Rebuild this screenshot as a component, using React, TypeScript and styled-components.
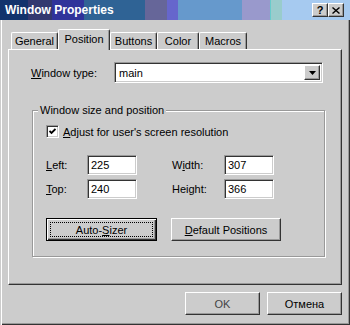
import React from "react";
import styled, { createGlobalStyle, css } from "styled-components";

const GlobalStyle = createGlobalStyle`
  html, body {
    margin: 0;
    padding: 0;
    background: #cccccc;
  }
  body {
    font-family: "Liberation Sans", Arial, sans-serif;
    font-size: 11px;
    color: #000000;
  }
`;

const raised = css`
  box-sizing: border-box;
  border: 1px solid;
  border-color: #ffffff #333333 #333333 #ffffff;
  box-shadow: inset -1px -1px #999999;
  background: #cccccc;
`;

const sunken = css`
  box-sizing: border-box;
  border: 1px solid;
  border-color: #999999 #ffffff #ffffff #999999;
  box-shadow: inset 1px 1px #333333, inset -1px -1px #cccccc;
  background: #ffffff;
`;

const Window = styled.div`
  width: 350px;
  height: 325px;
  box-sizing: border-box;
  display: flex;
  flex-direction: column;
  background: #cccccc;
  box-shadow: inset 1px 0 #cccccc, inset 2px 0 #ffffff, inset -1px -1px #333333,
    inset -2px -2px #999999;
`;

const TitleBar = styled.div`
  height: 20px;
  flex: none;
  display: flex;
  align-items: center;
  padding: 0 6px 0 5px;
  color: #ffffff;
  font-weight: bold;
  font-size: 12px;
  background: linear-gradient(
    to right,
    #12336c 0 28px,
    #33386f 28px 52px,
    #30339a 52px 84px,
    #2f6395 84px 145px,
    #666699 145px 167px,
    #6666cc 167px 178px,
    #6699cc 178px 242px,
    #9999cc 242px 270px,
    #66cccc 270px 271px,
    #99cccc 271px 282px,
    #a6caf0 282px
  );
`;

const Title = styled.span`
  flex: 1;
`;

const CaptionButton = styled.div`
  ${raised};
  width: 16px;
  height: 14px;
  display: flex;
  align-items: center;
  justify-content: center;
  color: #000000;
  font-size: 11px;
  font-weight: bold;
  line-height: 1;
`;

const Content = styled.div`
  flex: 1;
  display: flex;
  flex-direction: column;
  padding: 9px 8px 0 8px;
`;

const TabStrip = styled.div`
  display: flex;
  align-items: flex-end;
  height: 20px;
  padding-left: 3px;
`;

const Tab = styled.div<{ $active?: boolean; $w: number }>`
  position: relative;
  box-sizing: border-box;
  width: ${(p) => p.$w}px;
  height: ${(p) => (p.$active ? 21 : 17)}px;
  margin-bottom: ${(p) => (p.$active ? -1 : 0)}px;
  z-index: ${(p) => (p.$active ? 1 : 0)};
  display: flex;
  align-items: center;
  justify-content: center;
  padding-bottom: ${(p) => (p.$active ? 3 : 0)}px;
  border-top: 1px solid #ffffff;
  border-left: 1px solid #ffffff;
  border-right: 1px solid #333333;
  border-radius: 2px 2px 0 0;
  box-shadow: inset -1px 0 #999999;
  background: #cccccc;
`;

const Panel = styled.div`
  box-sizing: border-box;
  height: 236px;
  border: 1px solid;
  border-color: #ffffff #333333 #333333 #ffffff;
  box-shadow: inset -1px -1px #999999;
  padding: 12px 0 0 22px;
`;

const Row = styled.div`
  display: flex;
  align-items: center;
`;

const Label = styled.span<{ $w?: number }>`
  width: ${(p) => (p.$w ? `${p.$w}px` : "auto")};
  flex: none;
`;

const U = styled.span`
  text-decoration: underline;
  text-underline-offset: 1px;
`;

const Combo = styled.div`
  ${sunken};
  width: 209px;
  height: 21px;
  display: flex;
  align-items: stretch;
  padding: 2px;
`;

const ComboValue = styled.span`
  flex: 1;
  display: flex;
  align-items: center;
  padding-left: 2px;
`;

const DropButton = styled.div`
  ${raised};
  width: 16px;
  display: flex;
  align-items: center;
  justify-content: center;
`;

const GroupBox = styled.fieldset`
  box-sizing: border-box;
  width: 293px;
  margin: 21px 0 0 1px;
  padding: 8px 0 15px 13px;
  border: 1px solid #999999;
  box-shadow: 1px 1px #ffffff, inset 1px 1px #ffffff;
`;

const Legend = styled.legend`
  margin-left: -8px;
  padding: 0 2px;
  line-height: 13px;
  background: #cccccc;
`;

const CheckRow = styled.label`
  display: flex;
  align-items: center;
  gap: 4px;
`;

const CheckBox = styled.span`
  ${sunken};
  width: 13px;
  height: 13px;
  display: flex;
  align-items: center;
  justify-content: center;
`;

const FieldGrid = styled.div`
  display: grid;
  grid-template-columns: 41px 85px 52px 50px;
  row-gap: 4px;
  align-items: center;
  margin-top: 17px;
`;

const Field = styled.div`
  ${sunken};
  width: 50px;
  height: 20px;
  display: flex;
  align-items: center;
  padding-left: 3px;
`;

const ButtonRow = styled.div`
  display: flex;
  gap: 14px;
  margin-top: 19px;
`;

const Button = styled.div<{ $w: number; $focused?: boolean; $dim?: boolean }>`
  ${raised};
  width: ${(p) => p.$w}px;
  height: 23px;
  display: flex;
  align-items: center;
  justify-content: center;
  color: ${(p) => (p.$dim ? "#444444" : "#000000")};
  ${(p) =>
    p.$focused &&
    css`
      border-color: #000000;
      box-shadow: inset 1px 1px #ffffff, inset -1px -1px #333333,
        inset -2px -2px #999999;
    `}
`;

const FocusRect = styled.span`
  box-sizing: border-box;
  width: calc(100% - 6px);
  height: calc(100% - 6px);
  border: 1px dotted #000000;
  display: flex;
  align-items: center;
  justify-content: center;
`;

const Footer = styled.div`
  display: flex;
  justify-content: flex-end;
  gap: 7px;
  margin-top: 7px;
`;

export default function App() {
  return (
    <>
      <GlobalStyle />
      <Window>
        <TitleBar>
          <Title>Window Properties</Title>
          <CaptionButton>?</CaptionButton>
          <CaptionButton>
            <svg width="8" height="7" viewBox="0 0 8 7">
              <path d="M0.5 0.5 L7.5 6.5 M7.5 0.5 L0.5 6.5" stroke="#000" strokeWidth="1.4" />
            </svg>
          </CaptionButton>
        </TitleBar>
        <Content>
          <TabStrip>
            <Tab $w={47}>General</Tab>
            <Tab $w={52} $active>
              Position
            </Tab>
            <Tab $w={47}>Buttons</Tab>
            <Tab $w={42}>Color</Tab>
            <Tab $w={48}>Macros</Tab>
          </TabStrip>
          <Panel>
            <Row>
              <Label $w={83}>
                <U>W</U>indow type:
              </Label>
              <Combo>
                <ComboValue>main</ComboValue>
                <DropButton>
                  <svg width="7" height="4" viewBox="0 0 7 4">
                    <polygon points="0,0 7,0 3.5,4" fill="#000" />
                  </svg>
                </DropButton>
              </Combo>
            </Row>
            <GroupBox>
              <Legend>Window size and position</Legend>
              <CheckRow>
                <CheckBox>
                  <svg width="7" height="7" viewBox="0 0 7 7">
                    <polyline points="0.5,3 2.5,5 6.5,1" fill="none" stroke="#000" strokeWidth="1.8" />
                  </svg>
                </CheckBox>
                <span>
                  <U>A</U>djust for user's screen resolution
                </span>
              </CheckRow>
              <FieldGrid>
                <Label>
                  <U>L</U>eft:
                </Label>
                <Field>225</Field>
                <Label>
                  W<U>i</U>dth:
                </Label>
                <Field>307</Field>
                <Label>
                  <U>T</U>op:
                </Label>
                <Field>240</Field>
                <Label>Height:</Label>
                <Field>366</Field>
              </FieldGrid>
              <ButtonRow>
                <Button $w={111} $focused>
                  <FocusRect>
                    <span>
                      Auto-<U>S</U>izer
                    </span>
                  </FocusRect>
                </Button>
                <Button $w={110}>
                  <span>
                    <U>D</U>efault Positions
                  </span>
                </Button>
              </ButtonRow>
            </GroupBox>
          </Panel>
          <Footer>
            <Button $w={75} $dim>
              OK
            </Button>
            <Button $w={75}>Отмена</Button>
          </Footer>
        </Content>
      </Window>
    </>
  );
}
